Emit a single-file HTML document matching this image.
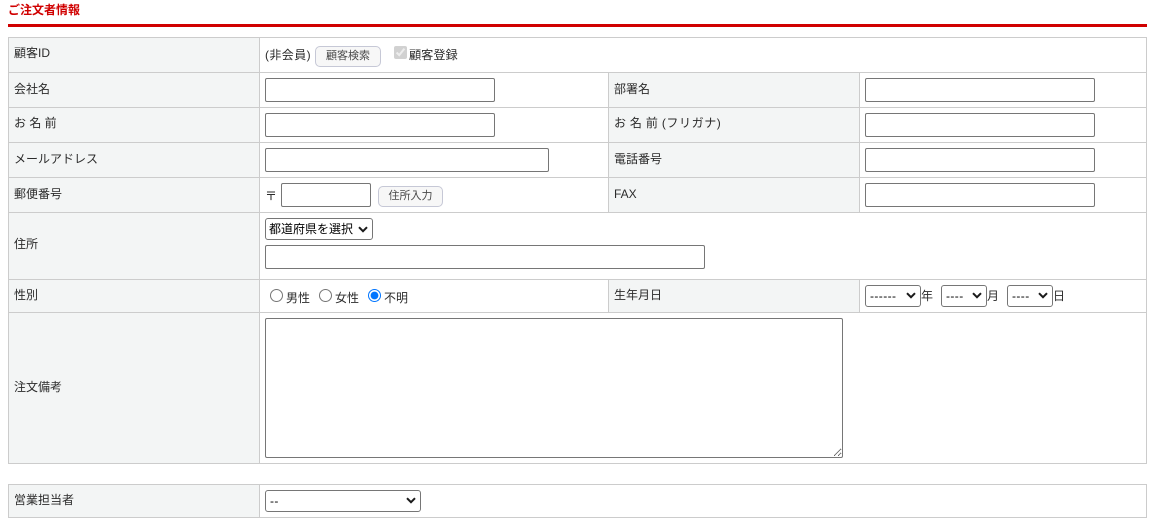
<!DOCTYPE html>
<html lang="ja"><head><meta charset="utf-8"><title>ご注文者情報</title>
<style>
html,body{margin:0;padding:0;background:#fff;width:1156px;height:523px;overflow:hidden}
body{position:relative;font:12px/16px "Liberation Sans","Noto Sans CJK JP",sans-serif;color:#2b2b2b}
.a{position:absolute;white-space:nowrap}
.bg{position:absolute;background:#f3f5f5}
.h{position:absolute;height:1px;background:#ccc}
.v{position:absolute;width:1px;background:#ccc}
input[type=text],select,textarea{position:absolute;box-sizing:border-box;margin:0;background:#fff;border:1px solid #767676;border-radius:2px;padding:0 1px;font:12px "Liberation Sans","Noto Sans CJK JP",sans-serif;color:#000}
input[type=text]{height:24px}
select{height:22px;border-radius:3px;appearance:none;-webkit-appearance:none;padding:0 3px;background:transparent}
select.d{padding-left:4px;letter-spacing:.4px}
textarea{resize:both}
.b{position:absolute;box-sizing:border-box;height:21px;border:1px solid #c6c8d6;border-radius:5px;background:#f7f7f7;color:#4a4a4a;font:11px/19px "Liberation Sans","Noto Sans CJK JP",sans-serif;text-align:center;padding:0}
input[type=radio],input[type=checkbox]{position:absolute;margin:0;width:13px;height:13px}
svg.c{position:absolute;width:10px;height:7px}
</style></head><body>
<div class="a" style="left:8px;top:2px;color:#d00000;font-weight:bold">ご注文者情報</div>
<div style="position:absolute;left:8px;top:24px;width:1139px;height:3px;background:#d00000"></div>

<div class="bg" style="left:9px;top:38px;width:250px;height:425px"></div>
<div class="bg" style="left:609px;top:73px;width:250px;height:139px"></div>
<div class="bg" style="left:609px;top:280px;width:250px;height:32px"></div>
<div class="bg" style="left:9px;top:485px;width:250px;height:32px"></div>

<div class="h" style="left:8px;top:37px;width:1139px"></div>
<div class="h" style="left:8px;top:72px;width:1139px"></div>
<div class="h" style="left:8px;top:107px;width:1139px"></div>
<div class="h" style="left:8px;top:142px;width:1139px"></div>
<div class="h" style="left:8px;top:177px;width:1139px"></div>
<div class="h" style="left:8px;top:212px;width:1139px"></div>
<div class="h" style="left:8px;top:279px;width:1139px"></div>
<div class="h" style="left:8px;top:312px;width:1139px"></div>
<div class="h" style="left:8px;top:463px;width:1139px"></div>
<div class="h" style="left:8px;top:484px;width:1139px"></div>
<div class="h" style="left:8px;top:517px;width:1139px"></div>
<div class="v" style="left:8px;top:37px;height:427px"></div>
<div class="v" style="left:259px;top:37px;height:427px"></div>
<div class="v" style="left:1146px;top:37px;height:427px"></div>
<div class="v" style="left:608px;top:72px;height:140px"></div>
<div class="v" style="left:859px;top:72px;height:140px"></div>
<div class="v" style="left:608px;top:279px;height:33px"></div>
<div class="v" style="left:859px;top:279px;height:33px"></div>
<div class="v" style="left:8px;top:484px;height:34px"></div>
<div class="v" style="left:259px;top:484px;height:34px"></div>
<div class="v" style="left:1146px;top:484px;height:34px"></div>

<div class="a" style="left:14px;top:45px">顧客ID</div>
<div class="a" style="left:14px;top:81px">会社名</div>
<div class="a" style="left:14px;top:115px">お 名 前</div>
<div class="a" style="left:14px;top:151px">メールアドレス</div>
<div class="a" style="left:14px;top:186px">郵便番号</div>
<div class="a" style="left:14px;top:236px">住所</div>
<div class="a" style="left:14px;top:287px">性別</div>
<div class="a" style="left:14px;top:379px">注文備考</div>
<div class="a" style="left:14px;top:492px">営業担当者</div>
<div class="a" style="left:614px;top:81px">部署名</div>
<div class="a" style="left:614px;top:115px;word-spacing:.6px">お 名 前 <span style="letter-spacing:.6px">(フリガナ)</span></div>
<div class="a" style="left:614px;top:151px">電話番号</div>
<div class="a" style="left:614px;top:186px">FAX</div>
<div class="a" style="left:614px;top:287px">生年月日</div>

<div class="a" style="left:265px;top:47px;letter-spacing:.4px">(非会員)</div>
<button class="b" style="left:315px;top:46px;width:66px">顧客検索</button>
<input type="checkbox" checked disabled style="left:394px;top:46px">
<div class="a" style="left:409px;top:47px;font-size:12.2px">顧客登録</div>

<input type="text" style="left:265px;top:78px;width:230px">
<input type="text" style="left:865px;top:78px;width:230px">
<input type="text" style="left:265px;top:113px;width:230px">
<input type="text" style="left:865px;top:113px;width:230px">
<input type="text" style="left:265px;top:148px;width:284px">
<input type="text" style="left:865px;top:148px;width:230px">
<div class="a" style="left:265px;top:188px">〒</div>
<input type="text" style="left:281px;top:183px;width:90px">
<button class="b" style="left:378px;top:186px;width:65px">住所入力</button>
<input type="text" style="left:865px;top:183px;width:230px">

<select style="left:265px;top:218px;width:108px"><option>都道府県を選択</option></select>
<svg class="c" viewBox="0 0 10 7" style="left:358px;top:226px"><path d="M1 1.2 5 5.2 9 1.2" fill="none" stroke="#1a1a1a" stroke-width="2"/></svg>
<input type="text" style="left:265px;top:245px;width:440px">

<input type="radio" name="g" style="left:270px;top:289px"><div class="a" style="left:286px;top:290px">男性</div>
<input type="radio" name="g" style="left:319px;top:289px"><div class="a" style="left:335px;top:290px">女性</div>
<input type="radio" name="g" checked style="left:368px;top:289px"><div class="a" style="left:384px;top:290px">不明</div>

<select class="d" style="left:865px;top:285px;width:56px"><option>------</option></select>
<svg class="c" viewBox="0 0 10 7" style="left:906px;top:292px"><path d="M1 1.2 5 5.2 9 1.2" fill="none" stroke="#1a1a1a" stroke-width="2"/></svg>
<div class="a" style="left:921px;top:288px">年</div>
<select class="d" style="left:941px;top:285px;width:46px"><option>----</option></select>
<svg class="c" viewBox="0 0 10 7" style="left:972px;top:292px"><path d="M1 1.2 5 5.2 9 1.2" fill="none" stroke="#1a1a1a" stroke-width="2"/></svg>
<div class="a" style="left:987px;top:288px">月</div>
<select class="d" style="left:1007px;top:285px;width:46px"><option>----</option></select>
<svg class="c" viewBox="0 0 10 7" style="left:1038px;top:292px"><path d="M1 1.2 5 5.2 9 1.2" fill="none" stroke="#1a1a1a" stroke-width="2"/></svg>
<div class="a" style="left:1053px;top:288px">日</div>

<textarea style="left:265px;top:318px;width:578px;height:140px"></textarea>
<select class="d" style="left:265px;top:490px;width:156px"><option>--</option></select>
<svg class="c" viewBox="0 0 10 7" style="left:406px;top:497px"><path d="M1 1.2 5 5.2 9 1.2" fill="none" stroke="#1a1a1a" stroke-width="2"/></svg>
</body></html>
